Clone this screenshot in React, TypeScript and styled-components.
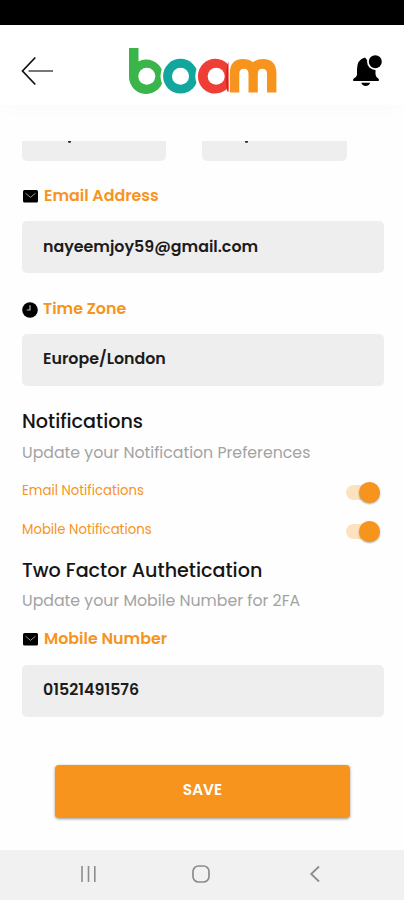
import React from "react";
import styled, { createGlobalStyle } from "styled-components";

const orange = "#f7941d";

const GlobalStyle = createGlobalStyle`
  * { box-sizing: border-box; }
  body {
    margin: 0;
    background: #fefefe;
    font-family: Poppins, Inter, "Liberation Sans", sans-serif;
  }
  svg { display: block; }
`;

const Screen = styled.div`
  display: flex;
  flex-direction: column;
  width: 404px;
  height: 900px;
  overflow: hidden;
  background: #fefefe;
`;

const StatusBar = styled.div`
  flex: none;
  height: 25px;
  background: #000;
`;

const Header = styled.header`
  flex: none;
  display: flex;
  align-items: center;
  justify-content: space-between;
  height: 80px;
  padding: 11px 22px 0 21px;
  background: #fff;
  box-shadow: 0 1px 20px rgba(0, 0, 0, 0.022);
`;

const IconButton = styled.button`
  display: flex;
  padding: 0;
  border: 0;
  background: none;
`;

const Content = styled.main`
  flex: 1;
  min-height: 0;
  display: flex;
  flex-direction: column;
  padding: 36px 20.5px 0 21.5px;
`;

const NameRow = styled.div`
  flex: none;
  display: flex;
  gap: 36px;
  height: 20px;
  overflow: hidden;
`;

const ClippedField = styled.div<{ $tail: number }>`
  width: 144.5px;
  height: 20px;
  border-radius: 0 0 5px 5px;
  background: #eee;
  &::before {
    content: "";
    display: block;
    width: 3px;
    height: 2px;
    margin-left: ${(p) => p.$tail}px;
    border-radius: 0 0 2px 2px;
    background: #333;
  }
`;

const Label = styled.label<{ $top: number }>`
  flex: none;
  display: flex;
  align-items: center;
  gap: 5.5px;
  height: 24px;
  margin-top: ${(p) => p.$top}px;
  color: ${orange};
  font-size: 15.85px;
  font-weight: 600;
  white-space: nowrap;
  svg { margin-top: 3px; }
`;

const Field = styled.div<{ $top: number; $lift?: number }>`
  flex: none;
  display: flex;
  align-items: center;
  height: 52px;
  margin-top: ${(p) => p.$top}px;
  padding: 0 21.5px ${(p) => p.$lift ?? 3}px;
  border-radius: 5px;
  background: #eee;
  color: #1c1c1c;
  font-size: 15.85px;
  font-weight: 600;
`;

const Heading = styled.h2<{ $top: number }>`
  flex: none;
  margin: ${(p) => p.$top}px 0 0 0.5px;
  color: #151515;
  font-size: 19.15px;
  font-weight: 500;
  line-height: 30px;
  white-space: nowrap;
`;

const Hint = styled.p<{ $top: number }>`
  flex: none;
  margin: ${(p) => p.$top}px 0 0 0.5px;
  color: #a3a3a3;
  font-size: 15.75px;
  line-height: 24px;
  white-space: nowrap;
`;

const ToggleList = styled.div`
  flex: none;
  margin-top: 6px;
`;

const ToggleRow = styled.div`
  display: flex;
  align-items: center;
  justify-content: space-between;
  height: 39.5px;
  padding: 0 4px 0 0.5px;
  color: ${orange};
  font-size: 13.25px;
`;

const Switch = styled.span`
  display: flex;
  align-items: center;
  justify-content: flex-end;
  width: 34px;
  height: 15px;
  margin-top: 3px;
  border-radius: 8px;
  background: #fde2bf;
`;

const Knob = styled.span`
  width: 21px;
  height: 21px;
  flex: none;
  border-radius: 50%;
  background: ${orange};
  box-shadow: 0 1px 2px rgba(0, 0, 0, 0.35);
`;

const SaveButton = styled.button`
  flex: none;
  align-self: center;
  width: 295px;
  height: 53px;
  margin: 48px 0 0;
  padding: 0 0 5px;
  border: 0;
  border-radius: 4px;
  background: ${orange};
  box-shadow: 0 1px 3px rgba(0, 0, 0, 0.4);
  color: #fff;
  font: 600 15.3px Poppins, Inter, sans-serif;
`;

const NavBar = styled.nav`
  flex: none;
  display: flex;
  align-items: center;
  justify-content: space-between;
  height: 50px;
  padding: 0 82px 1.5px 79px;
  background: #f1f1f1;
`;

const BackArrow = () => (
  <svg width="34" height="30" viewBox="0 0 34 30" fill="none">
    <path d="M7.5 15H32" stroke="#777" strokeWidth="2" />
    <path d="M14.3 1.5 1.5 15l12.8 13.5" stroke="#111" strokeWidth="1.7" />
  </svg>
);

/* Overlapping rings: each white disc bites the ring to its left. */
const Logo = () => (
  <svg width="150" height="49" viewBox="0 0 150 49" role="img" aria-label="boam">
    <path d="M1 2h9.5v13.4A17.2 17.2 0 1 1 1 30Z" fill="#39b54a" />
    <circle cx="18.8" cy="30.2" r="8.5" fill="#fff" />
    <circle cx="52.5" cy="30.2" r="20" fill="#fff" />
    <circle cx="52.5" cy="30.2" r="17.4" fill="#12a79d" />
    <circle cx="52.5" cy="30.2" r="8.5" fill="#fff" />
    <circle cx="87.3" cy="30.2" r="20" fill="#fff" />
    <path d="M100 18.3a17.4 17.4 0 1 0 0 23.8l.3 4V15Z" fill="#ee3e35" />
    <path d="M100.3 15.5q-4.3 14.5-1 30h1.3Z" fill="#d9201d" />
    <circle cx="88.2" cy="30.2" r="8.5" fill="#fff" />
    <path d="M101.8 46.5V27.5Q101.8 13 114.8 13q6 0 10.2 3.2Q129 13 135 13q13.4 0 13.4 14.5v19H139V27.7q0-4.9-4.6-4.9t-4.6 4.9v18.8h-9.3V27.7q0-4.9-4.6-4.9t-4.6 4.9v18.8Z" fill="#f7941d" />
  </svg>
);

const Bell = () => (
  <svg width="32" height="33" viewBox="0 0 32 33">
    <path d="M15 3.5q-8 2-8 12v5q0 2-3.8 4.5V27h25.6v-2q-3.3-2.5-3.3-4.5v-5L17 6Z" />
    <path d="M11.2 28.8h9q-1.5 3.2-4.5 3.2t-4.5-3.2Z" />
    <circle cx="25.3" cy="7.7" r="8.2" fill="#fff" />
    <circle cx="25.3" cy="7.7" r="6.5" />
  </svg>
);

const Envelope = () => (
  <svg width="17" height="13" viewBox="0 0 17 13" fill="none">
    <rect x="1" width="15" height="12.5" rx="1.5" fill="#000" />
    <path d="m3.5 3.2 5 4.2 5-4.2" stroke="#999" strokeWidth="1" />
  </svg>
);

const Clock = () => (
  <svg width="16" height="16" viewBox="0 0 16 16" fill="none">
    <circle cx="8" cy="8" r="7.8" fill="#000" />
    <path d="M8 3.2V8H4.7" stroke="#bbb" strokeWidth="1.2" />
  </svg>
);

const Recents = () => (
  <svg width="18" height="18" viewBox="0 0 18 18" stroke="#8c8c8c" strokeWidth="1.6">
    <path d="M3 1v16M9.5 1v16M15.8 1v16" />
  </svg>
);

const HomeIcon = styled.svg`
  margin-right: 3px;
`;

const Home = () => (
  <HomeIcon width="20" height="20" viewBox="0 0 20 20" fill="none" stroke="#8c8c8c" strokeWidth="1.7">
    <rect x="2" y="2" width="16" height="16" rx="5.5" />
  </HomeIcon>
);

const Back = () => (
  <svg width="14" height="18" viewBox="0 0 14 18" fill="none" stroke="#8c8c8c" strokeWidth="1.8">
    <path d="M11 1.5 3.2 9l7.8 7.5" />
  </svg>
);

export default function App() {
  return (
    <>
      <GlobalStyle />
      <Screen>
        <StatusBar />
        <Header>
          <IconButton aria-label="Back"><BackArrow /></IconButton>
          <Logo />
          <IconButton aria-label="Alerts"><Bell /></IconButton>
        </Header>
        <Content>
          <NameRow>
            <ClippedField $tail={46} />
            <ClippedField $tail={42.5} />
          </NameRow>
          <Label $top={22}><Envelope />Email Address</Label>
          <Field $top={14} $lift={2}>nayeemjoy59@gmail.com</Field>
          <Label $top={23}><Clock />Time Zone</Label>
          <Field $top={14}>Europe/London</Field>
          <Heading $top={21}>Notifications</Heading>
          <Hint $top={4}>Update your Notification Preferences</Hint>
          <ToggleList>
            <ToggleRow>Email Notifications<Switch><Knob /></Switch></ToggleRow>
            <ToggleRow>Mobile Notifications<Switch><Knob /></Switch></ToggleRow>
          </ToggleList>
          <Heading $top={6}>Two Factor Authetication</Heading>
          <Hint $top={3}>Update your Mobile Number for 2FA</Hint>
          <Label $top={13}><Envelope />Mobile Number</Label>
          <Field $top={15}>01521491576</Field>
          <SaveButton>SAVE</SaveButton>
        </Content>
        <NavBar>
          <Recents />
          <Home />
          <Back />
        </NavBar>
      </Screen>
    </>
  );
}
